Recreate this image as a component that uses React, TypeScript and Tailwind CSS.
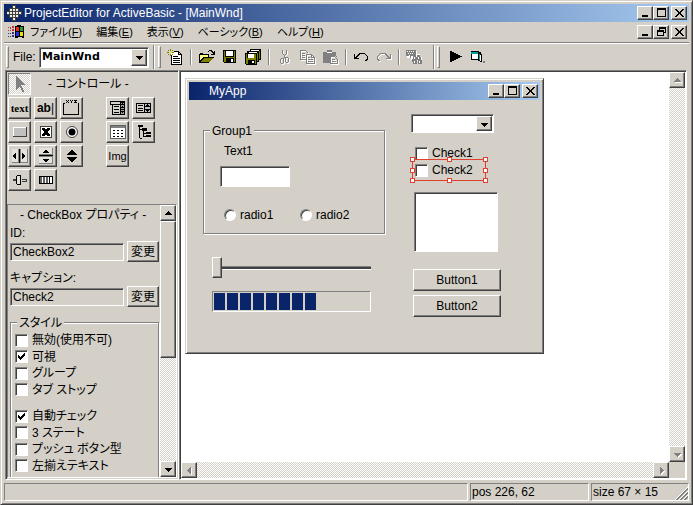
import type { ReactNode } from "react";

const raised = "border border-t-white border-l-white border-r-[#404040] border-b-[#404040] bg-[#d4d0c8] shadow-[inset_-1px_-1px_#808080]";
const sunken = "border border-t-[#808080] border-l-[#808080] border-r-white border-b-white shadow-[inset_1px_1px_#404040]";
const thinSunken = "border border-t-[#808080] border-l-[#808080] border-r-white border-b-white";
const etched = "border border-[#808080] shadow-[1px_1px_#fff,inset_1px_1px_#fff]";
const dither = "bg-[repeating-conic-gradient(#fff_0_25%,#d4d0c8_0_50%)] bg-[length:2px_2px]";

function Svg({ children, w = 16, h = 16, className = "" }: { children: ReactNode; w?: number; h?: number; className?: string }) {
  return (
    <svg width={w} height={h} viewBox={`0 0 ${w} ${h}`} fill="none" shapeRendering="crispEdges" className={`shrink-0 ${className}`} aria-hidden="true">
      {children}
    </svg>
  );
}

/* window caption buttons */
const captionIcons = {
  min: <path d="M3 8h6v2H3z" fill="#000" />,
  max: <path d="M2 1h9v9H2zM3 3v6h7V3z" fill="#000" fillRule="evenodd" />,
  restore: <path d="M4 1h7v6H9V6h1V3H5v1H4zM2 4h7v6H2zM3 6v3h5V6z" fill="#000" fillRule="evenodd" />,
  close: <path d="M2 2h2v1h1v1h1v1h1V4h1V3h1V2h2v1h-1v1H9v1H8v2h1v1h1v1h1v1H9V9H8V8H7V7H6v1H5v1H4v1H2V9h1V8h1V7h1V5H4V4H3V3H2z" fill="#000" />,
};

function CaptionButton({ kind, label }: { kind: keyof typeof captionIcons; label: string }) {
  return (
    <button aria-label={label} className={`flex h-3.5 w-4 items-center justify-center ${raised}`}>
      <Svg w={13} h={12}>
        {captionIcons[kind]}
      </Svg>
    </button>
  );
}

function CaptionButtons({ middle = "max" }: { middle?: "max" | "restore" }) {
  return (
    <div className="ml-auto flex pr-0.5">
      <CaptionButton kind="min" label="最小化" />
      <CaptionButton kind={middle} label="最大化" />
      <div className="w-0.5" />
      <CaptionButton kind="close" label="閉じる" />
    </div>
  );
}

const arrows = {
  up: "M7 5h1v1h1v1h1v1h1v1H4V8h1V7h1V6h1z",
  down: "M4 6h7v1h-1v1H9v1H8v1H7V9H6V8H5V7H4z",
  left: "M9 4v7H8v-1H7V9H6V8H5V7h1V6h1V5h1V4z",
  right: "M6 4v7h1v-1h1V9h1V8h1V7H9V6H8V5H7V4z",
};

function ScrollButton({ dir, disabled = false }: { dir: keyof typeof arrows; disabled?: boolean }) {
  return (
    <button aria-label={dir} className={`flex h-4 w-4 shrink-0 items-center justify-center ${raised}`}>
      <Svg w={14} h={14}>
        {disabled && <path d={arrows[dir]} fill="#fff" transform="translate(1 1)" />}
        <path d={arrows[dir]} fill={disabled ? "#808080" : "#000"} />
      </Svg>
    </button>
  );
}

function Combo({ label, className, children }: { label: string; className: string; children?: ReactNode }) {
  return (
    <div className={`relative bg-white ${sunken} ${className}`}>
      <select aria-label={label} className="h-full w-full appearance-none pl-0.5 font-['DejaVu_Sans',sans-serif] text-[11px] font-bold outline-none">
        {children}
      </select>
      <span className={`pointer-events-none absolute top-px right-px bottom-px flex w-4 items-center justify-center ${raised}`}>
        <Svg w={14} h={14}>
          <path d={arrows.down} fill="#000" />
        </Svg>
      </span>
    </div>
  );
}

function Check({ label, checked = false }: { label: string; checked?: boolean }) {
  return (
    <label className="flex items-center gap-1 whitespace-nowrap">
      <span className="relative h-[13px] w-[13px] shrink-0">
        <input type="checkbox" defaultChecked={checked} className={`peer block h-[13px] w-[13px] appearance-none bg-white ${sunken}`} />
        <Svg w={13} h={13} className="pointer-events-none absolute inset-0 hidden peer-checked:block">
          <path d="M3 5h1v1h1v1h1V6h1V5h1V4h1V3h1v3H9v1H8v1H7v1H6v1H5V9H4V8H3z" fill="#000" />
        </Svg>
      </span>
      {label}
    </label>
  );
}

function Radio({ label }: { label: string }) {
  return (
    <label className="flex items-center gap-1">
      <input type="radio" name="radio" className={`block h-3 w-3 appearance-none rounded-full bg-white ${sunken}`} />
      {label}
    </label>
  );
}

/* main toolbar */
const Separator = ({ className = "" }: { className?: string }) => <div className={`h-4 w-0.5 border-l border-[#808080] bg-white ${className}`} />;
const Gripper = () => <div className="h-[22px] w-[3px] border border-t-white border-r-[#808080] border-b-[#808080] border-l-white" />;

function Tool({ label, children, w = 16 }: { label: string; children: ReactNode; w?: number }) {
  return (
    <button aria-label={label} title={label} className="flex">
      <Svg w={w}>{children}</Svg>
    </button>
  );
}

function Etch({ d }: { d: string }) {
  return (
    <>
      <path d={d} stroke="#fff" transform="translate(1 1)" />
      <path d={d} stroke="#808080" />
    </>
  );
}

const floppy = (
  <>
    <path d="M1 1h13v13H2v-1H1z" fill="#000" />
    <path d="M2 2h1v6h9V2h1v11H2z" fill="#808000" />
    <path d="M4 2h7v5H4z" fill="#fff" />
    <path d="M4 9h8v5H4z" fill="#000" />
    <path d="M9 10h2v3H9z" fill="#fff" />
  </>
);

function Toolbar() {
  return (
    <div className="flex h-[26px] items-center">
      <div className="ml-0.5">
        <Gripper />
      </div>
      <span className="ml-1 w-[26px]">File:</span>
      <Combo label="File" className="h-[21px] w-[110px]">
        <option>MainWnd</option>
      </Combo>
      <div className="ml-1 flex items-center gap-[3px]">
        <div className="h-6 w-0.5 border-l border-[#808080] bg-white" />
        <Gripper />
      </div>
      <div className="ml-1.5 flex items-center gap-[7px]">
        <Tool label="新規作成">
          <path d="M4 3h7v1h1v1h1v1h1v9H4z" fill="#fff" />
          <path d="M4.5 6v9.500h10V5.500L11.500 2.500H7M11.500 3v2.500H14" stroke="#000" />
          <path d="M6 7h5v1H6zM6 9h7v1H6zM6 11h7v1H6zM6 13h7v1H6z" fill="#000" />
          <path d="M3 0h1v2H3zM3 5h1v2H3zM0 3h2v1H0zM5 3h2v1H5zM1 1h1v1H1zM5 1h1v1H5zM1 5h1v1H1zM5 5h1v1H5z" fill="#808000" />
          <path d="M3 2h1v3H3zM2 3h3v1H2z" fill="#e0e060" />
        </Tool>
        <Separator />
        <Tool label="開く">
          <path d="M0 5h1V4h3v1h6v3h5v1h-1v1h-1v1h-1v1h-1v1h-1v1H0z" fill="#000" />
          <path d="M1 6h8v2H4v1H3v1H2v1H1z" fill="#ffff80" />
          <path d="M5 9h9v1h-1v1h-1v1h-1v1H2v-1h1v-1h1v-1h1z" fill="#808000" />
          <path d="M9 2h1V1h3v1h1v1h1V2h1v4h-4V5h2V4h-1V3h-1V2h-2v1H9z" fill="#000" />
        </Tool>
        <Tool label="保存">{floppy}</Tool>
        <Tool label="すべて保存">
          <path d="M5 0h11v11h-2v2h-2v3H1V15H0V4h2V2h3z" fill="#000" />
          <path d="M6 1h8v1H6zM4 3h8v1H4z" fill="#fff" />
          <path d="M14 2h1v8h-1zM12 4h1v8h-1zM1 5h1v4h7V5h2v10H1z" fill="#808000" />
          <path d="M3 5h6v4H3z" fill="#fff" />
          <path d="M3 11h7v4H3z" fill="#000" />
          <path d="M7 12h2v2H7z" fill="#fff" />
        </Tool>
        <Separator />
        <Tool label="切り取り">
          <Etch d="M5.500 1v3l2 3v2M9.500 1v3l-2 3M6.500 9.500h-2l-1 1v3l1 1h1l1-1zM8.500 8.500h2l1 1v3l-1 1h-1l-1-1z" />
        </Tool>
        <Tool label="コピー">
          <Etch d="M.5 1.500h5l3 3M.5 1v9.500h5M2 4.500h3M2 6.500h3M2 8.500h3M6.500 5.500h5l3 3v6h-8zM11.500 5v3.500H15M8 8.500h2M8 10.500h5M8 12.500h5" />
        </Tool>
        <Tool label="貼り付け">
          <path d="M0 3h4V1h5v2h4v4h1v7H0z" fill="#808080" />
          <path d="M4 3h5v1H4z" fill="#fff" />
          <path d="M7 7h6v1h1v1h1v6H7z" fill="#d4d0c8" />
          <Etch d="M7.500 7.500h4l3 3v4h-7zM9 10.500h3M9 12.500h4" />
        </Tool>
        <Separator className="-mx-px" />
        <Tool label="元に戻す">
          <path d="M1 5h1v3h1V7h1V6h1V5h1V4h6v1h1v1h1v1h1v4h-1v1h-2v-1h1v-1h1V7h-1V6h-1V5H7v1H6v1H5v1H4v1h2v1H1z" fill="#000" />
        </Tool>
        <Tool label="やり直し">
          <path d="M16 6h-1v3h-1V8h-1V7h-1V6h-1V5H5v1H4v1H3v1H2v4h1v1h2v-1H4v-1H3V8h1V7h1V6h5v1h1v1h1v1h1v1h-2v1h5z" fill="#fff" />
          <path d="M15 5h-1v3h-1V7h-1V6h-1V5h-1V4H4v1H3v1H2v1H1v4h1v1h2v-1H3v-1H2V7h1V6h1V5h5v1h1v1h1v1h1v1h-2v1h5z" fill="#808080" />
        </Tool>
        <Separator className="-mx-px" />
        <Tool label="検索">
          <path d="M1 2h10v3h3v3h2v7h-4v-3h-1v3H7v-4H5V9H1z" fill="#fff" />
          <path d="M0 1h10v6H5v2H4V7H0z" fill="#808080" />
          <path d="M1 2h1v1H1zM3 2h1v1H3zM5 2h1v1H5zM7 2h1v1H7zM2 4h1v1H2zM4 4h1v1H4zM6 4h1v1H6zM3 6h1v1H3z" fill="#fff" />
          <path d="M7 6h3v2h1V6h3v2h1v3h1v4h-4v-4h-1v4H7v-2H6v-3h1z" fill="#808080" />
          <path d="M8 8h1v2H8zM12 8h1v2h-1zM8 12h1v2H8zM13 12h1v2h-1z" fill="#fff" />
        </Tool>
        <div className="flex items-center gap-0.5 pl-1">
          <div className="h-6 w-0.5 border-l border-[#808080] bg-white" />
          <Gripper />
        </div>
        <Tool label="実行">
          <path d="M3 2h2v1h2v1h2v1h2v1h2v1h2v1h-2v1h-2v1H9v1H7v1H5v1H3z" fill="#000" />
        </Tool>
        <Tool label="ウィンドウ">
          <path d="M1 2h8v1h2v2h1v8h-2v-1H8v-1H1z" fill="#000" />
          <path d="M1 3h7v2H1z" fill="#00a0a0" />
          <path d="M2 5h6v5H2z" fill="#fff" />
          <path d="M9 5h1v6H9z" fill="#00a0a0" />
          <path d="M10 6h1v6h-1z" fill="#fff" />
          <path d="M13 12h2v2h-2z" fill="#808080" />
        </Tool>
      </div>
    </div>
  );
}

/* toolbox */
function Box({ label, children }: { label: string; children: ReactNode }) {
  return (
    <button aria-label={label} className={`flex h-[22px] w-[23px] items-center justify-center ${raised}`}>
      {children}
    </button>
  );
}

function Toolbox() {
  return (
    <div className="pt-px pb-[13px] pl-px">
      <div className="mb-0.5 flex items-center">
        <button aria-label="選択" className={`flex h-[22px] w-[23px] items-center justify-center ${thinSunken} ${dither}`}>
          <Svg>
            <path d="M4 0h1v1h1v1h1v1h1v1h1v1h1v1h1v1h1v1h1v1H9v1h1v2h1v2h1v2h-2v-2H9v-2H8v-1H7v1H6v1H5v1H4z" fill="#808080" />
          </Svg>
        </button>
        <span className="ml-[17px]">- コントロール -</span>
      </div>
      <div className="flex gap-[23px]">
        <div className="grid grid-cols-[repeat(3,23px)] content-start gap-x-[3px] gap-y-0.5">
          <Box label="テキスト">
            <span className="font-['Liberation_Serif',serif] text-[11px] leading-4 font-bold">text</span>
          </Box>
          <Box label="エディット">
            <span className="flex text-xs leading-4 font-bold">
              ab<span className="font-normal">|</span>
            </span>
          </Box>
          <Box label="グループボックス">
            <Svg w={19} h={18}>
              <path d="M3 4.500H1.500v11h15v-11H16" stroke="#000" />
              <path d="M4 1h1v1H4zM6 1h1v1H6zM5 2h1v1H5zM4 3h1v1H4zM6 3h1v1H6zM8 1h1v1H8zM10 1h1v1h-1zM9 2h1v2H9zM12 1h3v1h-3zM13 2h1v1h-1zM12 3h3v1h-3z" fill="#000" />
            </Svg>
          </Box>
          <Box label="ボタン">
            <Svg>
              <path d="M1 3h14v10H1z" fill="#404040" />
              <path d="M1 3h13v9H1z" fill="#fff" />
              <path d="M2 4h12v8H2z" fill="#c0c0c0" />
            </Svg>
          </Box>
          <Box label="チェックボックス">
            <Svg>
              <path d="M2 2h12v12H2z" fill="#fff" />
              <path d="M2 2h12v12H2zM3 3v10h10V3z" fill="#404040" fillRule="evenodd" />
              <path d="M4 4h3v1h2V4h3v2h-1v1h-1v2h1v1h1v2H9v-1H7v1H4v-2h1V9h1V7H5V6H4z" fill="#000" />
            </Svg>
          </Box>
          <Box label="ラジオボタン">
            <svg width="16" height="16" viewBox="0 0 16 16">
              <circle cx="8" cy="8" r="5.500" fill="#fff" stroke="#404040" />
              <circle cx="8" cy="8" r="3.500" />
            </svg>
          </Box>
          <Box label="水平スクロール">
            <Svg w={19} h={16}>
              <path d="M2 1h7v14H2zM10 1h8v14h-8z" fill="#808080" />
              <path d="M2 1h6v13H2zM11 1h6v13h-6z" fill="#e4e2dc" />
              <path d="M9 1h1v14H9z" fill="#000" />
              <path d="M6 5v6H5v-1H4V9H3V7h1V6h1V5zM12 5v6h1v-1h1V9h1V7h-1V6h-1V5z" fill="#000" />
            </Svg>
          </Box>
          <Box label="垂直スクロール">
            <Svg>
              <path d="M1 0h14v7H1zM1 8h14v8H1z" fill="#808080" />
              <path d="M1 0h13v6H1zM1 9h13v6H1z" fill="#e4e2dc" />
              <path d="M1 7h14v1H1z" fill="#000" />
              <path d="M7 2h2v1h1v1h1v1H5V4h1V3h1zM5 11h6v1h-1v1H9v1H7v-1H6v-1H5z" fill="#000" />
            </Svg>
          </Box>
          <Box label="アップダウン">
            <Svg>
              <path d="M7 2h2v1h1v1h1v1h1v1h1v1H3V6h1V5h1V4h1V3h1zM3 9h10v1h-1v1h-1v1h-1v1H9v1H7v-1H6v-1H5v-1H4v-1H3z" fill="#000" />
            </Svg>
          </Box>
          <Box label="トラックバー">
            <Svg>
              <path d="M1 7h3v2H1zM10 7h5v1h-5zM10 9h5v1h-5zM14 7h1v3h-1z" fill="#404040" />
              <path d="M5.500 3.500h3v9h-3l-1-1v-7z" fill="#e4e2dc" stroke="#000" />
            </Svg>
          </Box>
          <Box label="プログレスバー">
            <Svg>
              <path d="M1 4h14v8H1z" fill="#000" />
              <path d="M2 5h12v6H2z" fill="#fff" />
              <path d="M2 5h2v6H2zM5 5h2v6H5zM8 5h2v6H8z" fill="#606060" />
              <path d="M11 5h1v6h-1z" fill="#000" />
            </Svg>
          </Box>
        </div>
        <div className="grid grid-cols-[repeat(2,23px)] content-start gap-x-[3px] gap-y-0.5">
          <Box label="コンボボックス">
            <Svg w={17} h={16}>
              <path d="M1.500 1.500h14v3h-14zM3.500 4.500h12v10h-12zM11.500 1v14" stroke="#000" />
              <path d="M12 2h3v2h-3zM12 5h3v9h-3z" fill="#a0a0a0" />
              <path d="M12 2h3v1h-1v1h-1V3h-1zM13 6h1v1h1v1h-3V7h1zM12 11h3v1h-1v1h-1v-1h-1zM12 9h3v1h-3zM5 6h5v1H5zM5 9h5v1H5zM5 12h5v1H5z" fill="#000" />
            </Svg>
          </Box>
          <Box label="リストボックス">
            <Svg>
              <path d="M.5 3.500h14v9H.5zM8.500 3v10" stroke="#000" />
              <path d="M9 4h5v8H9z" fill="#c0c0c0" />
              <path d="M11 4h1v1h1v1h1v1H9V6h1V5h1zM9 9h5v1h-1v1h-1v1h-1v-1h-1v-1H9zM2 5h5v1H2zM2 8h5v1H2zM2 10h5v1H2z" fill="#000" />
            </Svg>
          </Box>
          <Box label="リストビュー">
            <Svg>
              <path d="M0 1h16v14H0z" fill="#606060" />
              <path d="M1 4h14v10H1z" fill="#fff" />
              <path d="M1 2h14v2H1z" fill="#808080" />
              <path d="M3 6h2v1H3zM7 6h2v1H7zM11 6h2v1h-2zM3 9h2v1H3zM7 9h2v1H7zM11 9h2v1h-2zM3 12h2v1H3zM7 12h2v1H7zM11 12h2v1h-2z" fill="#000" />
            </Svg>
          </Box>
          <Box label="ツリービュー">
            <Svg>
              <path d="M2 1h5v2H2zM3 3h1v11H3zM4 5h2v1H4zM6 4h5v3H6zM7 7h1v6H7zM8 9h2v1H8zM10 8h5v2h-5zM8 12h2v1H8zM10 11h5v2h-5zM4 14h2v1H4z" fill="#000" />
            </Svg>
          </Box>
          <Box label="イメージ">
            <span className="text-[11px] leading-4">Img</span>
          </Box>
        </div>
      </div>
    </div>
  );
}

function Property({ id, label, value }: { id: string; label: string; value: string }) {
  return (
    <div className="mb-2">
      <label htmlFor={id} className="block h-4 leading-4">
        {label}
      </label>
      <div className="flex items-center gap-[3px]">
        <input id={id} defaultValue={value} readOnly className={`h-[18px] w-[114px] bg-transparent pl-0.5 outline-none ${sunken}`} />
        <button className={`h-[21px] flex-1 leading-4 ${raised}`}>変更</button>
      </div>
    </div>
  );
}

function Properties() {
  return (
    <div className={`flex min-h-0 flex-1 ${thinSunken}`}>
      <div className="flex-1 overflow-hidden px-px pl-0.5">
        <h2 className="h-5 pl-2.5 leading-5">- CheckBox プロパティ -</h2>
        <Property id="prop-id" label="ID:" value="CheckBox2" />
        <Property id="prop-caption" label="キャプション:" value="Check2" />
        <fieldset className={`relative mt-[15px] flex flex-col gap-2.5 px-1 pt-[9px] pb-6 ${etched}`}>
          <legend className="absolute -top-2 left-1.5 bg-[#d4d0c8] px-0.5 leading-4">スタイル</legend>
          <div className="grid h-[66px] grid-rows-4">
            <Check label="無効(使用不可)" />
            <Check label="可視" checked />
            <Check label="グループ" />
            <Check label="タブ ストップ" />
          </div>
          <div className="grid h-[66px] grid-rows-4">
            <Check label="自動チェック" checked />
            <Check label="3 ステート" />
            <Check label="プッシュ ボタン型" />
            <Check label="左揃えテキスト" />
          </div>
        </fieldset>
      </div>
      <div className={`flex w-4 flex-col ${dither}`}>
        <ScrollButton dir="up" />
        <div className={`h-[137px] ${raised}`} />
        <div className="mt-auto">
          <ScrollButton dir="down" />
        </div>
      </div>
    </div>
  );
}

/* the form being edited; its controls sit wherever the user dropped them */
function Handle({ className }: { className: string }) {
  return <span className={`absolute h-[5px] w-[5px] border border-[#e04030] bg-white ${className}`} />;
}

function FormWindow() {
  return (
    <div className="mt-1.5 ml-1 w-[359px] border border-t-[#d4d0c8] border-r-[#404040] border-b-[#404040] border-l-[#d4d0c8] bg-[#d4d0c8] p-[3px] shadow-[inset_1px_1px_#fff,inset_-1px_-1px_#808080]">
      <div className="flex h-[18px] items-center bg-linear-to-r/srgb from-[#0a246a] to-[#a6caf0] pl-5 text-white">
        MyApp
        <CaptionButtons />
      </div>
      <div className="relative h-[250px]">
        <fieldset className={`absolute top-[30px] left-3.5 h-[104px] w-[182px] ${etched}`}>
          <legend className="absolute -top-2 left-1.5 bg-[#d4d0c8] px-0.5 leading-4">Group1</legend>
        </fieldset>
        <label htmlFor="edit1" className="absolute top-[43px] left-[35px] leading-4">
          Text1
        </label>
        <input id="edit1" className={`absolute top-[66px] left-[31px] h-[21px] w-[70px] bg-white outline-none ${sunken}`} />
        <div className="absolute top-[107px] left-[35px] flex leading-4">
          <div className="w-[76px]">
            <Radio label="radio1" />
          </div>
          <Radio label="radio2" />
        </div>
        <input
          type="range"
          aria-label="Slider1"
          min={0}
          max={100}
          defaultValue={0}
          className="absolute top-[157px] left-[23px] m-0 h-[21px] w-[159px] appearance-none bg-transparent [&::-webkit-slider-runnable-track]:h-1 [&::-webkit-slider-runnable-track]:border-y [&::-webkit-slider-runnable-track]:border-t-[#808080] [&::-webkit-slider-runnable-track]:border-b-white [&::-webkit-slider-runnable-track]:bg-[#404040] [&::-webkit-slider-thumb]:-mt-2.5 [&::-webkit-slider-thumb]:h-[21px] [&::-webkit-slider-thumb]:w-2.5 [&::-webkit-slider-thumb]:appearance-none [&::-webkit-slider-thumb]:border [&::-webkit-slider-thumb]:border-t-white [&::-webkit-slider-thumb]:border-r-[#404040] [&::-webkit-slider-thumb]:border-b-[#404040] [&::-webkit-slider-thumb]:border-l-white [&::-webkit-slider-thumb]:bg-[#d4d0c8] [&::-webkit-slider-thumb]:shadow-[inset_-1px_-1px_#808080]"
        />
        <div role="progressbar" aria-valuenow={66} className={`absolute top-[191px] left-[23px] flex h-[21px] w-[159px] gap-0.5 p-px ${thinSunken}`}>
          {Array.from({ length: 8 }, (_, i) => (
            <div key={i} className="w-[11px] bg-[#0a246a]" />
          ))}
        </div>
        <Combo label="Combo1" className="absolute! top-3.5 left-[222px] h-[19px] w-[83px]" />
        <div className="absolute top-[45px] left-[226px] leading-4">
          <Check label="Check1" />
        </div>
        <div className="absolute top-[62px] left-[226px] leading-4">
          <Check label="Check2" />
        </div>
        <div className="pointer-events-none absolute top-[59px] left-[223px] h-[22px] w-[74px] border border-[#e04030]">
          <Handle className="-top-[3px] -left-[3px]" />
          <Handle className="-top-[3px] left-[34px]" />
          <Handle className="-top-[3px] -right-[3px]" />
          <Handle className="top-[8px] -left-[3px]" />
          <Handle className="top-[8px] -right-[3px]" />
          <Handle className="-bottom-[3px] -left-[3px]" />
          <Handle className="-bottom-[3px] left-[34px]" />
          <Handle className="-right-[3px] -bottom-[3px]" />
        </div>
        <div role="listbox" aria-label="List1" className={`absolute top-[92px] left-[225px] h-[60px] w-[84px] bg-white ${sunken}`} />
        <button className={`absolute top-[169px] left-[224px] h-[22px] w-[88px] ${raised}`}>Button1</button>
        <button className={`absolute top-[195px] left-[224px] h-[22px] w-[88px] ${raised}`}>Button2</button>
      </div>
    </div>
  );
}

const menus = [
  ["ファイル", "F"],
  ["編集", "E"],
  ["表示", "V"],
  ["ベーシック", "B"],
  ["ヘルプ", "H"],
];

export default function App() {
  return (
    <div className="flex h-screen flex-col border border-t-[#d4d0c8] border-r-[#404040] border-b-[#404040] border-l-[#d4d0c8] bg-[#d4d0c8] p-[3px] font-['Liberation_Sans','Noto_Sans_CJK_JP',sans-serif] text-xs leading-4 text-black shadow-[inset_1px_1px_#fff,inset_-1px_-1px_#808080] [font-feature-settings:'palt']">
      <header className="flex h-[18px] shrink-0 items-center bg-linear-to-r/srgb from-[#0a246a] to-[#a6caf0] pl-[3px] text-white">
        <Svg>
          <path d="M5 0h4v3h3v3h3v4h-3v3H9v3H5v-3H2v-3H0V6h2V3h3z" fill="#404040" />
          <path d="M6 1h2v2H6zM3 4h2v2H3zM6 4h2v2H6zM9 4h2v2H9zM0 7h2v2H0zM3 7h2v2H3zM6 7h2v2H6zM9 7h2v2H9zM12 7h2v2h-2zM3 10h2v2H3zM6 10h2v2H6zM9 10h2v2H9zM6 13h2v2H6z" fill="#f0f0e0" />
        </Svg>
        <h1 className="ml-px">ProjectEditor for ActiveBasic - [MainWnd]</h1>
        <CaptionButtons />
      </header>

      <nav className="flex h-5 shrink-0 items-center pl-1">
        <Svg>
          <path d="M7 2h2V1h4v1h3v12h-2v-1h-4v1H7z" fill="#000" />
          <path d="M8 3h3v4H8z" fill="#e03020" />
          <path d="M12 3h3v4h-3z" fill="#20a030" />
          <path d="M8 8h3v4H8z" fill="#2030e0" />
          <path d="M12 8h3v4h-3z" fill="#f0e000" />
          <path d="M0 3h1v1H0zM2 3h1v2H2zM4 2h2v2H4zM0 6h1v1H0zM2 6h1v1H2zM4 5h2v2H4z" fill="#c03030" />
          <path d="M0 9h1v1H0zM2 9h1v1H2zM4 8h2v2H4zM0 12h1v1H0zM2 12h1v1H2zM4 11h2v2H4z" fill="#303090" />
        </Svg>
        <div className="ml-1.5 flex gap-3.5 text-[11px]">
          {menus.map(([name, key]) => (
            <button key={key} className="whitespace-nowrap">
              {name}(<u>{key}</u>)
            </button>
          ))}
        </div>
        <CaptionButtons middle="restore" />
      </nav>

      <div className="h-0.5 shrink-0 border-t border-[#808080] bg-white" />
      <Toolbar />

      <main className="mr-0.5 ml-px flex min-h-0 flex-1">
        <aside className={`flex w-[174px] shrink-0 flex-col p-px ${sunken}`}>
          <Toolbox />
          <Properties />
        </aside>
        <section className={`flex min-w-0 flex-1 flex-col bg-white p-px ${sunken}`}>
          <div className="flex min-h-0 flex-1">
            <div className="min-w-0 flex-1 overflow-hidden">
              <FormWindow />
            </div>
            <div className={`flex w-4 flex-col justify-between ${dither}`}>
              <ScrollButton dir="up" disabled />
              <ScrollButton dir="down" disabled />
            </div>
          </div>
          <div className="flex h-4 bg-[#d4d0c8]">
            <div className={`flex flex-1 justify-between ${dither}`}>
              <ScrollButton dir="left" disabled />
              <ScrollButton dir="right" disabled />
            </div>
            <div className="w-4" />
          </div>
        </section>
      </main>

      <footer className="mt-[3px] flex h-[18px] shrink-0 gap-0.5">
        <div className={`flex-1 ${thinSunken}`} />
        <div className={`w-[119px] pl-px ${thinSunken}`}>pos 226, 62</div>
        <div className={`flex w-[98px] justify-between pl-px ${thinSunken}`}>
          size 67 × 15
          <Svg w={13} h={13} className="self-end">
            <path d="M0 13L13 0M4 13L13 4M8 13L13 8" stroke="#fff" />
            <path d="M1 13L13 1M2 13L13 2M5 13L13 5M6 13L13 6M9 13L13 9M10 13L13 10" stroke="#808080" />
          </Svg>
        </div>
      </footer>
    </div>
  );
}
